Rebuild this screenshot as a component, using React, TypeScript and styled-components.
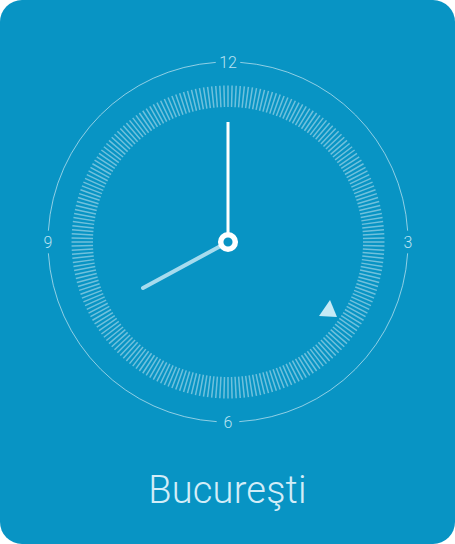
import React from "react";
import styled, { createGlobalStyle } from "styled-components";

const GlobalStyle = createGlobalStyle`
  html, body {
    margin: 0;
    padding: 0;
    background: #ffffff;
  }
  body {
    font-family: Roboto, "Noto Sans", sans-serif;
  }
`;

const Card = styled.div`
  width: 455px;
  height: 544px;
  box-sizing: border-box;
  border-radius: 22px;
  background: #0894c4;
  display: flex;
  flex-direction: column;
  align-items: center;
  padding-top: 42px;
  overflow: hidden;
`;

const Dial = styled.svg`
  width: 400px;
  height: 400px;
  display: block;
  flex: none;
`;

const City = styled.div`
  margin-top: 29px;
  font-family: Roboto, "Noto Sans", sans-serif;
  font-weight: 300;
  font-size: 38px;
  line-height: 38px;
  color: #d3edf8;
  letter-spacing: 0.2px;
`;

const NumberLabel = styled.text`
  font-family: Roboto, "Noto Sans", sans-serif;
  font-weight: 300;
  font-size: 16px;
  fill: #b9e2f2;
`;

const R = 180;
const GAP = 3.6;

function arc(a1: number, a2: number) {
  const p = (a: number) => {
    const rad = ((a - 90) * Math.PI) / 180;
    return [R * Math.cos(rad), R * Math.sin(rad)];
  };
  const [x1, y1] = p(a1);
  const [x2, y2] = p(a2);
  return `M ${x1.toFixed(2)} ${y1.toFixed(2)} A ${R} ${R} 0 0 1 ${x2.toFixed(2)} ${y2.toFixed(2)}`;
}

const ticks = Array.from({ length: 240 }, (_, i) => {
  const a = (i * 2 * Math.PI) / 240;
  const c = Math.cos(a);
  const s = Math.sin(a);
  return { x1: 135 * c, y1: 135 * s, x2: 156.5 * c, y2: 156.5 * s };
});

export default function App() {
  return (
    <>
      <GlobalStyle />
      <Card>
        <Dial viewBox="-200 -200 400 400">
          {[0, 90, 180, 270].map((a) => (
            <path
              key={a}
              d={arc(a + GAP + (a === 0 ? 0.3 : 0), a + 90 - GAP - (a === 270 ? 0.3 : 0))}
              fill="none"
              stroke="rgba(255,255,255,0.55)"
              strokeWidth={1}
            />
          ))}
          <g stroke="rgba(255,255,255,0.42)" strokeWidth={1.5}>
            {ticks.map((t, i) => (
              <line key={i} x1={t.x1} y1={t.y1} x2={t.x2} y2={t.y2} />
            ))}
          </g>
          <NumberLabel x={0} y={-180} textAnchor="middle" dominantBaseline="central">12</NumberLabel>
          <NumberLabel x={180} y={0} textAnchor="middle" dominantBaseline="central">3</NumberLabel>
          <NumberLabel x={0} y={180} textAnchor="middle" dominantBaseline="central">6</NumberLabel>
          <NumberLabel x={-180} y={0} textAnchor="middle" dominantBaseline="central">9</NumberLabel>
          <polygon points="91,74 109,75 102,58" fill="#c6eaf6" />
          <line x1={0} y1={0} x2={-85} y2={46} stroke="#a6dbee" strokeWidth={4} strokeLinecap="round" />
          <line x1={0} y1={0} x2={0} y2={-120} stroke="#ffffff" strokeWidth={3} />
          <circle cx={0} cy={0} r={7.3} fill="#0894c4" stroke="#ffffff" strokeWidth={5.5} />
        </Dial>
        <City>Bucureşti</City>
      </Card>
    </>
  );
}
